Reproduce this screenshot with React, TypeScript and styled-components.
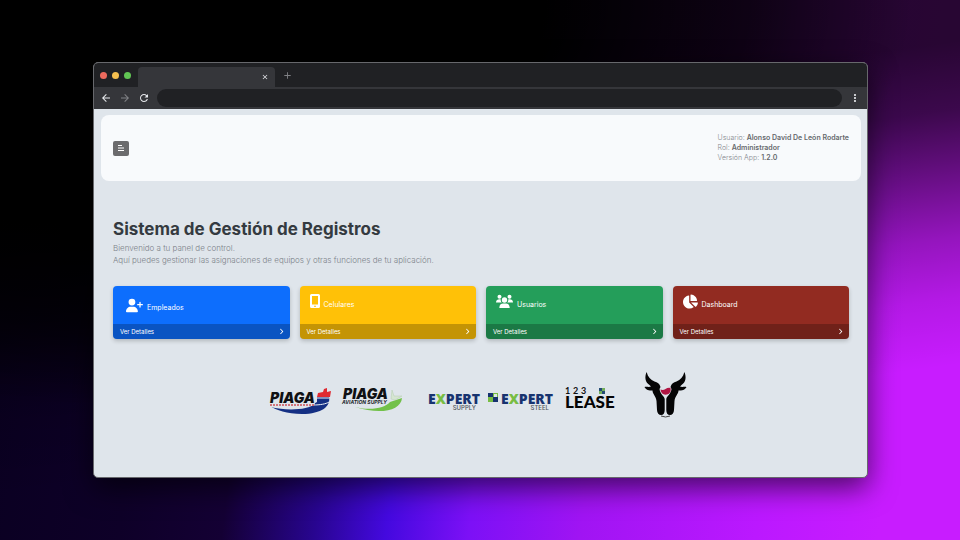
import React from "react";
import styled, { createGlobalStyle } from "styled-components";
import { FaUserPlus, FaAngleRight } from "react-icons/fa6";
import { FaChartPie } from "react-icons/fa";
import { MdArrowBack, MdArrowForward, MdRefresh, MdMoreVert, MdClose, MdAdd } from "react-icons/md";

const GlobalStyle = createGlobalStyle`
  * { box-sizing: border-box; }
  body { margin: 0; background: #000; font-family: Inter, "Open Sans", sans-serif; }
  h1, p, dl, dd { margin: 0; }
`;

const Backdrop = styled.div`
  min-height: 100vh;
  padding: 62px 92px 62px 93px;
  display: flex;
  background:
    radial-gradient(ellipse 85% 75% at 10% 0%, #000 55%, rgba(0, 0, 0, 0.6) 80%, transparent 100%),
    linear-gradient(172deg, rgba(0, 0, 0, 0.8) 0%, rgba(0, 0, 0, 0.8) 26%, rgba(0, 0, 0, 0.7) 36%, rgba(0, 0, 0, 0.52) 44%, rgba(0, 0, 0, 0.26) 55%, rgba(0, 0, 0, 0.1) 64%, transparent 74%),
    linear-gradient(97deg, #090020 0%, #0e0028 18%, #140034 28%, #280590 37%, #4409df 44%, #7c10f6 52%, #a014f3 63%, #bb18ff 80%, #c81cff 92%);
`;

const BrowserWindow = styled.div`
  flex: 1;
  min-width: 0;
  display: flex;
  flex-direction: column;
  overflow: hidden;
  border: 1px solid #67686c;
  border-radius: 5px;
  background: #dfe5eb;
  box-shadow: 0 10px 28px rgba(0, 0, 0, 0.6);
`;

const TabStrip = styled.div`
  height: 24px;
  padding-left: 6px;
  display: flex;
  align-items: center;
  background: #202124;
`;

const WindowDots = styled.div`
  display: flex;
  gap: 5px;
`;

const Dot = styled.span<{ $color: string }>`
  width: 7px;
  height: 7px;
  border-radius: 50%;
  background: ${(p) => p.$color};
`;

const Tab = styled.div`
  width: 137px;
  height: 20px;
  margin: 4px 6px 0 7px;
  padding-right: 4px;
  display: flex;
  align-items: center;
  justify-content: flex-end;
  border-radius: 4px 4px 0 0;
  background: #35363a;
`;

const ChromeButton = styled.button<{ $dim?: boolean }>`
  width: 12px;
  height: 16px;
  padding: 0;
  display: flex;
  flex-shrink: 0;
  align-items: center;
  justify-content: center;
  border: 0;
  background: none;
  color: ${(p) => (p.$dim ? "#808185" : "#e8eaed")};
`;

const Toolbar = styled.div`
  height: 22px;
  padding: 0 6px;
  display: flex;
  align-items: center;
  gap: 7px;
  background: #35363a;
`;

const Address = styled.input`
  flex: 1;
  min-width: 0;
  height: 18px;
  padding: 0 10px;
  border: 0;
  border-radius: 9px;
  background: #202124;
  color: #e8eaed;
  font-size: 9px;
`;

const Header = styled.header`
  min-height: 66px;
  margin: 6px 6px 0 7px;
  padding: 0 12px;
  display: flex;
  align-items: center;
  justify-content: space-between;
  border-radius: 8px;
  background: #f8fafc;
`;

const MenuButton = styled.button`
  width: 16px;
  height: 15px;
  padding: 0;
  display: flex;
  align-items: center;
  justify-content: center;
  border: 0;
  border-radius: 2px;
  background: #6b6b6d;
  color: #fff;
`;

const UserInfo = styled.dl`
  font-size: 7px;
  line-height: 10px;
  color: #85898e;
`;

const InfoLine = styled.div`
  display: flex;
  gap: 2px;
  font-weight: 300;
  dd { font-weight: 600; color: #66696d; }
`;

const Main = styled.main`
  padding: 36px 18px 0 19px;
`;

const Title = styled.h1`
  font-size: 17px;
  line-height: 25px;
  font-weight: 700;
  color: #343a40;
`;

const Intro = styled.p`
  font-size: 8px;
  line-height: 12px;
  font-weight: 300;
  color: #7b8188;
`;

const Cards = styled.section`
  margin-top: 20px;
  display: grid;
  grid-template-columns: repeat(4, 1fr);
  gap: 10px;
`;

const CardBox = styled.article<{ $color: string }>`
  overflow: hidden;
  border-radius: 4px;
  background: ${(p) => p.$color};
  color: #fff;
  box-shadow: 0 2px 4px rgba(0, 0, 0, 0.2);
`;

const CardBody = styled.div<{ $inset?: boolean }>`
  height: 38px;
  padding: ${(p) => (p.$inset ? "11px 13px" : "8px 10px")};
  display: flex;
  align-items: flex-start;
  gap: 4px;
  font-size: 7px;
  line-height: 21px;
  svg { flex-shrink: 0; }
`;

const CardLink = styled.a`
  height: 15px;
  padding: 0 5px 0 7px;
  display: flex;
  align-items: center;
  justify-content: space-between;
  background: rgba(0, 0, 0, 0.23);
  color: #fff;
  font-size: 6px;
  text-decoration: none;
`;

const Brands = styled.section`
  margin-top: 33px;
  padding-right: 7px;
  display: flex;
  align-items: flex-end;
  justify-content: center;
`;

const BrandSvg = styled.svg<{ $after?: number; $below?: number }>`
  flex-shrink: 0;
  overflow: visible;
  margin-right: ${(p) => p.$after ?? 0}px;
  margin-bottom: ${(p) => p.$below ?? 0}px;
`;

function PhoneIcon() {
  return (
    <svg width="10" height="14" viewBox="0 0 10 14" aria-hidden="true">
      <path fill="currentColor" fillRule="evenodd" d="M1.5 0H8.5A1.5 1.5 0 0 1 10 1.5V12.5A1.5 1.5 0 0 1 8.5 14H1.5A1.5 1.5 0 0 1 0 12.5V1.5A1.5 1.5 0 0 1 1.5 0ZM2 2V10.5H8V2ZM4 11.7V12.7H6V11.7Z" />
    </svg>
  );
}

function GroupIcon() {
  return (
    <svg width="17" height="15" viewBox="0 0 17 15" fill="currentColor" aria-hidden="true">
      <circle cx="3.5" cy="2.7" r="2" />
      <circle cx="13.5" cy="2.7" r="2" />
      <circle cx="8.5" cy="6" r="2.7" />
      <path d="M0 8.5C0 6.3 1.5 5.3 3.5 5.3H4.7C4.6 6.8 5.1 8 6 8.5ZM17 8.5C17 6.3 15.5 5.3 13.5 5.3H12.3C12.4 6.8 11.9 8 11 8.5Z" />
      <path d="M3.3 14C3.3 11 5 9.6 7 9.6H10C12 9.6 13.7 11 13.7 14Z" />
    </svg>
  );
}

const cards = [
  { label: "Empleados", color: "#0d6efd", icon: <FaUserPlus size={17} />, inset: true },
  { label: "Celulares", color: "#ffc107", icon: <PhoneIcon />, inset: false },
  { label: "Usuarios", color: "#249e5a", icon: <GroupIcon />, inset: false },
  { label: "Dashboard", color: "#922b21", icon: <FaChartPie size={15} />, inset: false },
];

const info = [
  ["Usuario:", "Alonso David De León Rodarte"],
  ["Rol:", "Administrador"],
  ["Versión App:", "1.2.0"],
];

const LogoText = styled.text<{ $size: number; $weight: number; $color: string; $italic?: boolean; $face?: string }>`
  font-family: ${(p) => p.$face ?? "Inter"}, sans-serif;
  font-size: ${(p) => p.$size}px;
  font-weight: ${(p) => p.$weight};
  font-style: ${(p) => (p.$italic ? "italic" : "normal")};
  fill: ${(p) => p.$color};
`;

function PiagaLogo() {
  return (
    <BrandSvg width="64" height="30" viewBox="0 0 64 30" $after={9} $below={2} role="img" aria-label="Piaga">
      <path d="M1 20 C17 24 40 22 48 16 V11 H60 C62 20 53 28 33 28 C18 28 7 24 1 20Z" fill="#142f83" />
      <path d="M1 21 C18 25 39 24 46 18 L45 15 L1 17Z" fill="#dfe5eb" />
      <path d="M49 7 L54 6 L55 3 L58 2 V6 L62 5 L61 11 H48Z" fill="#df2931" />
      <path d="M48 12 H60 M44 19 C51 19 57 18 60 16" stroke="#edf1f6" fill="none" />
      <LogoText x="1" y="17" $size={14} $weight={900} $color="#101114" $italic>PIAGA</LogoText>
      <path d="M1 19 H45" stroke="#ce5058" strokeWidth="1.5" strokeDasharray="2 1" />
    </BrandSvg>
  );
}

function AviationLogo() {
  return (
    <BrandSvg width="62" height="30" viewBox="0 0 62 30" $after={24} $below={2} role="img" aria-label="Piaga Aviation Supply">
      <path d="M13 21 C29 25 43 22 48 16 L60 12 C59 25 38 29 13 21Z" fill="#72c14a" />
      <path d="M50 4 L52 10 L60 10 L53 14 L49 13Z" fill="#d5e5d2" stroke="#b4cfae" strokeWidth="0.5" />
      <LogoText x="1" y="13" $size={14} $weight={900} $color="#101114" $italic>PIAGA</LogoText>
      <LogoText x="0" y="18" $size={5} $weight={700} $color="#22252b" $italic>AVIATION SUPPLY</LogoText>
    </BrandSvg>
  );
}

function ExpertLogo({ kind }: { kind: "SUPPLY" | "STEEL" }) {
  const steel = kind === "STEEL";
  const start = steel ? 13 : 0;
  return (
    <BrandSvg width={start + 49} height="22" viewBox={`0 0 ${start + 49} 22`} $after={steel ? 15 : 11} $below={5} role="img" aria-label={`Expert ${kind}`}>
      {steel && <><path d="M0 2H10V11H0Z" fill="#17336f" /><path d="M5 2H10V6H5ZM0 6H5V11H0Z" fill="#78bd43" /><path d="M6 3H9V6H6Z" fill="#dce9e5" /></>}
      <LogoText x={start} y="13" $size={14} $weight={800} $color="#17336f" $face="'Open Sans'">
        E<tspan fill="#78bd43">X</tspan>PERT
      </LogoText>
      <LogoText x={start + 48} y="19" textAnchor="end" $size={6} $weight={500} $color="#50565a">{kind}</LogoText>
    </BrandSvg>
  );
}

function LeaseLogo() {
  return (
    <BrandSvg width="52" height="26" viewBox="0 0 52 26" $after={27} $below={6} role="img" aria-label="123 Lease">
      <LogoText y="8" $size={9} $weight={700} $color="#111" $face="Lato"><tspan x="0">1</tspan><tspan x="8">2</tspan><tspan x="16">3</tspan></LogoText>
      <path d="M34 2H40V8H34Z" fill="#244b75" /><path d="M37 2H40V5H37ZM34 5H37V8H34Z" fill="#73ae5c" />
      <LogoText x="0" y="22" $size={17} $weight={900} $color="#050505" $face="Lato">LEASE</LogoText>
    </BrandSvg>
  );
}

const bullHalf =
  "M1.6 0 C-0.5 5 0 10 4.5 13 L6 14.5 C4 15.5 2 14.5 -0.5 15 C1 18 4 18.5 7.5 18.5 C7.5 22 11 24 11.5 29 L12 38 C12 41 14 43 16 43 C18.5 43 19.7 41 19.7 38 V27 C19.5 24.5 15 22 14.5 17 L15.5 15 C14.5 11.5 12.5 10.5 9.5 9.5 C5.5 8 3 5 1.6 0Z";

function BullLogo() {
  return (
    <BrandSvg width="43" height="46" viewBox="-1 0 43 46" role="img" aria-label="Toro">
      <path d={bullHalf} fill="#050506" />
      <path d={bullHalf} transform="matrix(-1 0 0 1 41 0)" fill="#050506" />
      <path d="M15.5 17.5 Q18 18.7 20.5 17 T25.5 16 C26.5 20 24 22.7 20.5 22.7 C17.5 22.7 15.8 20.5 15.5 17.5Z" fill="#b01543" />
      <path d="M16 44 Q20.5 46 25 44" fill="none" stroke="#444" />
    </BrandSvg>
  );
}

export default function App() {
  return (
    <>
      <GlobalStyle />
      <Backdrop>
        <BrowserWindow>
          <TabStrip>
            <WindowDots><Dot $color="#ed6a5e" /><Dot $color="#f5bf4f" /><Dot $color="#61c554" /></WindowDots>
            <Tab><ChromeButton aria-label="Cerrar pestaña"><MdClose size={8} /></ChromeButton></Tab>
            <ChromeButton $dim aria-label="Nueva pestaña"><MdAdd size={11} /></ChromeButton>
          </TabStrip>
          <Toolbar>
            <ChromeButton aria-label="Atrás"><MdArrowBack size={12} /></ChromeButton>
            <ChromeButton $dim aria-label="Adelante"><MdArrowForward size={12} /></ChromeButton>
            <ChromeButton aria-label="Recargar"><MdRefresh size={12} /></ChromeButton>
            <Address aria-label="Dirección" />
            <ChromeButton aria-label="Más opciones"><MdMoreVert size={12} /></ChromeButton>
          </Toolbar>
          <Header>
            <MenuButton aria-label="Menú">
              <svg width="8" height="8" viewBox="0 0 8 8" stroke="currentColor"><path d="M1 1.5H5M1 4H7M1 6.5H7" /></svg>
            </MenuButton>
            <UserInfo>
              {info.map(([label, value]) => <InfoLine key={label}><dt>{label}</dt><dd>{value}</dd></InfoLine>)}
            </UserInfo>
          </Header>
          <Main>
            <Title>Sistema de Gestión de Registros</Title>
            <Intro>Bienvenido a tu panel de control.<br />Aquí puedes gestionar las asignaciones de equipos y otras funciones de tu aplicación.</Intro>
            <Cards>
              {cards.map((card) => (
                <CardBox key={card.label} $color={card.color}>
                  <CardBody $inset={card.inset}>{card.icon}<span>{card.label}</span></CardBody>
                  <CardLink href="#">Ver Detalles<FaAngleRight size={7} /></CardLink>
                </CardBox>
              ))}
            </Cards>
            <Brands>
              <PiagaLogo /><AviationLogo /><ExpertLogo kind="SUPPLY" /><ExpertLogo kind="STEEL" /><LeaseLogo /><BullLogo />
            </Brands>
          </Main>
        </BrowserWindow>
      </Backdrop>
    </>
  );
}
